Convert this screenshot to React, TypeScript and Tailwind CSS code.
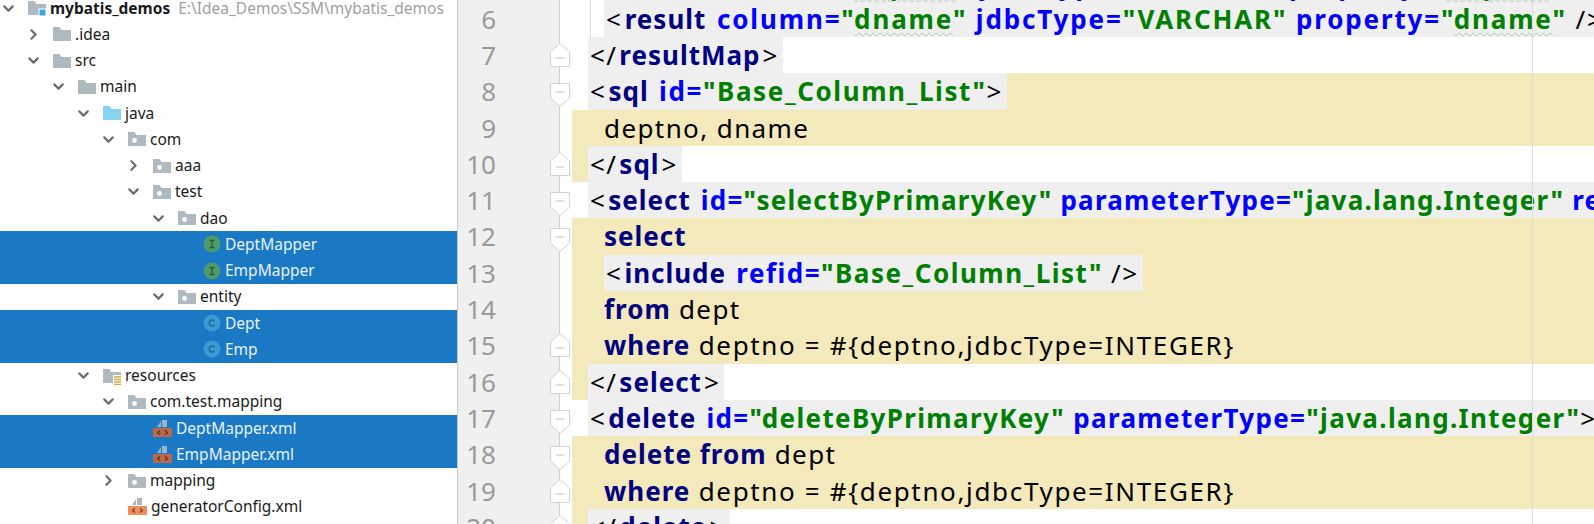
import { ChevronDown, ChevronRight } from 'lucide-react';
import type { ReactNode } from 'react';

type TreeRow = {
  name: string;
  level: number;
  icon: string;
  open?: boolean;
  selected?: boolean;
  hint?: string;
};

const tree: TreeRow[] = [
  { name: 'mybatis_demos', level: 0, icon: 'module', open: true, hint: 'E:\\Idea_Demos\\SSM\\mybatis_demos' },
  { name: '.idea', level: 1, icon: 'folder', open: false },
  { name: 'src', level: 1, icon: 'folder', open: true },
  { name: 'main', level: 2, icon: 'folder', open: true },
  { name: 'java', level: 3, icon: 'source', open: true },
  { name: 'com', level: 4, icon: 'package', open: true },
  { name: 'aaa', level: 5, icon: 'package', open: false },
  { name: 'test', level: 5, icon: 'package', open: true },
  { name: 'dao', level: 6, icon: 'package', open: true },
  { name: 'DeptMapper', level: 7, icon: 'interface', selected: true },
  { name: 'EmpMapper', level: 7, icon: 'interface', selected: true },
  { name: 'entity', level: 6, icon: 'package', open: true },
  { name: 'Dept', level: 7, icon: 'class', selected: true },
  { name: 'Emp', level: 7, icon: 'class', selected: true },
  { name: 'resources', level: 3, icon: 'resources', open: true },
  { name: 'com.test.mapping', level: 4, icon: 'package', open: true },
  { name: 'DeptMapper.xml', level: 5, icon: 'xml', selected: true },
  { name: 'EmpMapper.xml', level: 5, icon: 'xml', selected: true },
  { name: 'mapping', level: 4, icon: 'package', open: false },
  { name: 'generatorConfig.xml', level: 4, icon: 'xml' },
];

function TreeIcon({ kind, selected }: { kind: string; selected?: boolean }) {
  if (kind === 'interface' || kind === 'class') {
    const isInterface = kind === 'interface';
    return (
      <svg width="18" height="18" viewBox="0 0 18 18" className="shrink-0">
        <circle cx="9" cy="9" r="8.5" fill={isInterface ? '#4f9a68' : '#3a9bd2'} />
        {isInterface ? (
          <path d="M6.5 5.5h5M9 5.5v7M6.5 12.5h5" stroke="#25603f" strokeWidth="1.4" fill="none" />
        ) : (
          <path d="M11.5 7a3 3 0 1 0 0 4" stroke="#1c6a9c" strokeWidth="1.5" fill="none" />
        )}
      </svg>
    );
  }
  if (kind === 'xml') {
    return (
      <svg width="19" height="19" viewBox="0 0 19 19" className="shrink-0">
        <path d="M9 1h5v7H9zM8 2v6H4z" fill={selected ? '#9db4c9' : '#b4b4b4'} />
        <rect x="0" y="9" width="19" height="9" fill={selected ? '#b9694a' : '#f08c60'} />
        <path d="M7 11.5l-2.5 2 2.5 2M12 11.5l2.5 2-2.5 2" stroke={selected ? '#5a2f20' : '#7a3a1e'} strokeWidth="1.2" fill="none" />
      </svg>
    );
  }
  const fill = kind === 'source' ? '#87d2ee' : '#aeb9c0';
  return (
    <svg width="18" height="18" viewBox="0 0 18 18" className="shrink-0">
      <path d="M0 2h6.5l2 3H18v11H0z" fill={fill} />
      {kind === 'package' && <circle cx="6.5" cy="10.5" r="2.4" fill="#fff" />}
      {kind === 'module' && <rect x="11" y="10" width="7" height="7" fill="#3aa8e0" stroke="#fff" strokeWidth="1" />}
      {kind === 'resources' && (
        <g>
          <rect x="10" y="8" width="8" height="10" fill="#fff" />
          <path d="M11 10h7M11 12.5h7M11 15h7M11 17.5h7" stroke="#d9a93f" strokeWidth="1.4" />
        </g>
      )}
    </svg>
  );
}

function Tree() {
  return (
    <div className="w-[457px] shrink-0 -mt-[5px] font-['Noto_Sans',sans-serif] text-[15.5px]">
      {tree.map((row) => (
        <div
          key={row.name}
          className={`flex h-[26.25px] items-center whitespace-nowrap ${row.selected ? 'bg-[#1a79c4] text-[#e8f2fb]' : 'text-[#1a1a1a]'}`}
        >
          <div className="w-[28px] shrink-0" style={{ marginLeft: row.level * 25 }}>
            {row.open === true && <ChevronDown size={17} strokeWidth={3} className="text-[#6b6b6b]" />}
            {row.open === false && <ChevronRight size={17} strokeWidth={3} className="text-[#6b6b6b]" />}
          </div>
          <TreeIcon kind={row.icon} selected={row.selected} />
          <span className={`ml-[4px] ${row.level === 0 ? 'font-bold' : ''}`}>{row.name}</span>
          {row.hint && <span className="ml-[8px] text-[#a0a0a0]">{row.hint}</span>}
        </div>
      ))}
    </div>
  );
}

// keyword with no brackets round it
const Kw = ({ children }: { children: ReactNode }) => <span className="font-bold tracking-[1px] text-[#000080]">{children}</span>;
// tag name, sits a little away from its < and >
const Tag = ({ children }: { children: ReactNode }) => <span className="mx-[2px] font-bold tracking-[1px] text-[#000080]">{children}</span>;
const Attr = ({ children }: { children: ReactNode }) => <span className="font-bold text-[#0000ff]">{children}</span>;
const Val = ({ children }: { children: ReactNode }) => <span className="font-bold text-[#008000]">{children}</span>;
const Wavy = ({ children }: { children: ReactNode }) => (
  <span className="underline decoration-wavy decoration-[#a9cba9] decoration-1 underline-offset-[3px]">{children}</span>
);

type CodeLine = {
  n: number;
  fold?: 'up' | 'down';
  margin?: boolean;
  fill?: 'yellow' | 'gray';
  strip?: boolean;
  indent?: boolean;
  code: ReactNode;
};

const lines: CodeLine[] = [
  {
    n: 5, indent: true, fill: 'gray',
    code: <span className="relative top-[3px] z-10 tracking-[1.85px]">&lt;<Tag>result</Tag> <Attr>column=</Attr><Val>"<Wavy>deptno</Wavy>"</Val> <Attr>jdbcType=</Attr><Val>"INTEGER"</Val> <Attr>property=</Attr><Val>"<Wavy>deptno</Wavy>"</Val> /&gt;</span>,
  },
  {
    n: 6, indent: true, fill: 'gray',
    code: <span className="tracking-[1.85px]">&lt;<Tag>result</Tag> <Attr>column=</Attr><Val>"<Wavy>dname</Wavy>"</Val> <Attr>jdbcType=</Attr><Val>"VARCHAR"</Val> <Attr>property=</Attr><Val>"<Wavy>dname</Wavy>"</Val> /&gt;</span>,
  },
  { n: 7, fold: 'up', strip: true, code: <>&lt;/<Tag>resultMap</Tag>&gt;</> },
  { n: 8, fold: 'down', strip: true, fill: 'yellow', code: <span className="tracking-[1.6px]">&lt;<Tag>sql</Tag> <Attr>id=</Attr><Val>"Base_Column_List"</Val>&gt;</span> },
  { n: 9, margin: true, fill: 'yellow', indent: true, code: <>deptno, dname</> },
  { n: 10, fold: 'up', margin: true, strip: true, code: <>&lt;/<Tag>sql</Tag>&gt;</> },
  {
    n: 11, fold: 'down', strip: true, fill: 'gray',
    code: <span className="tracking-[1.25px]">&lt;<Tag>select</Tag> <Attr>id=</Attr><Val>"selectByPrimaryKey"</Val> <Attr>parameterType=</Attr><Val>"java.lang.Integer"</Val> <Attr>resultMap=</Attr><Val>"BaseResultMap"</Val>&gt;</span>,
  },
  { n: 12, fold: 'down', margin: true, fill: 'yellow', indent: true, code: <Kw>select</Kw> },
  { n: 13, margin: true, fill: 'yellow', indent: true, strip: true, code: <span className="tracking-[1.5px]">&lt;<Tag>include</Tag> <Attr>refid=</Attr><Val>"Base_Column_List"</Val> /&gt;</span> },
  { n: 14, margin: true, fill: 'yellow', indent: true, code: <><Kw>from</Kw> dept</> },
  { n: 15, fold: 'up', margin: true, fill: 'yellow', indent: true, code: <span className="tracking-[1.65px]"><Kw>where</Kw> deptno = #&#123;deptno,jdbcType=INTEGER&#125;</span> },
  { n: 16, fold: 'up', margin: true, strip: true, code: <>&lt;/<Tag>select</Tag>&gt;</> },
  {
    n: 17, fold: 'down', strip: true, fill: 'gray',
    code: <span className="tracking-[1.35px]">&lt;<Tag>delete</Tag> <Attr>id=</Attr><Val>"deleteByPrimaryKey"</Val> <Attr>parameterType=</Attr><Val>"java.lang.Integer"</Val>&gt;</span>,
  },
  { n: 18, fold: 'down', margin: true, fill: 'yellow', indent: true, code: <><Kw>delete from</Kw> dept</> },
  { n: 19, fold: 'up', margin: true, fill: 'yellow', indent: true, code: <span className="tracking-[1.65px]"><Kw>where</Kw> deptno = #&#123;deptno,jdbcType=INTEGER&#125;</span> },
  { n: 20, fold: 'up', margin: true, strip: true, code: <>&lt;/<Tag>delete</Tag>&gt;</> },
];

function FoldMark({ dir }: { dir: 'up' | 'down' }) {
  return (
    <svg
      width="20"
      height="24"
      viewBox="0 0 20 24"
      className={`absolute left-[-10.5px] ${dir === 'up' ? 'top-[6px]' : 'top-[10px]'}`}
    >
      {dir === 'up' ? (
        <path d="M.5 23.5V9L10 .5 19.5 9v14.5z" fill="#fff" stroke="#d2d2d2" />
      ) : (
        <path d="M.5 .5h19V15L10 23.5.5 15z" fill="#fff" stroke="#d2d2d2" />
      )}
      <path d={dir === 'up' ? 'M5.5 15h9' : 'M5.5 9h9'} stroke="#c4c4c4" />
    </svg>
  );
}

function Editor() {
  return (
    <div className="relative min-w-0 flex-1 -mt-[35.6px] border-l border-[#c9c9c9] font-['Noto_Sans',sans-serif] text-[26px]">
      {lines.map((line) => {
        const full = line.fill === 'gray';
        const shaded = line.strip || full;
        return (
          <div key={line.n} className="flex h-[36.3px] items-stretch whitespace-nowrap">
            <div className="w-[102px] shrink-0 border-r border-[#d0d0d0] bg-[#f0f0f0] pr-[63px] text-right leading-[37px] text-[#9a9a9a]">
              {line.n}
            </div>
            <div className="relative w-[12px] shrink-0">{line.fold && <FoldMark dir={line.fold} />}</div>
            <div className={`w-[16px] shrink-0 ${line.margin ? 'bg-[#f4e9ba]' : ''}`} />
            <div
              className={`flex min-w-0 flex-1 leading-[37px] tracking-[1.4px] text-black ${line.fill === 'yellow' ? 'bg-[#f4e9ba]' : ''} ${line.indent ? 'pl-[16px]' : ''} ${line.n === 5 ? '' : 'overflow-hidden'}`}
            >
              <div className={`pr-[4px] ${shaded ? 'bg-[#efefef] pl-[2px]' : ''} ${full ? 'flex-1' : ''}`}>
                {line.code}
              </div>
            </div>
          </div>
        );
      })}
      <div className="absolute bottom-0 left-[1074px] top-0 w-px bg-[#dcdcdc]" />
      <div className="absolute left-[132px] top-[36px] h-[38px] w-px bg-[#dcdcdc]" />
    </div>
  );
}

export default function App() {
  return (
    <div className="flex h-[524px] w-[1594px] overflow-hidden bg-white">
      <Tree />
      <Editor />
    </div>
  );
}
